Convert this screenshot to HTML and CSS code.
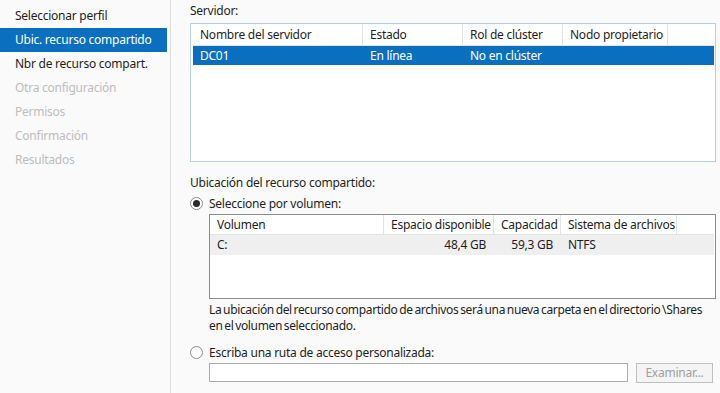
FILE: index.html
```html
<!DOCTYPE html>
<html lang="es">
<head>
    <meta charset="UTF-8">
    <title>Asistente para nuevo recurso compartido</title>
    <link rel="stylesheet" href="styles.css">
</head>
<body>
    <div class="wizard">
        <div class="nav">
            <div class="nav-item">Seleccionar perfil</div>
            <div class="nav-item active">Ubic. recurso compartido</div>
            <div class="nav-item">Nbr de recurso compart.</div>
            <div class="nav-item disabled">Otra configuración</div>
            <div class="nav-item disabled">Permisos</div>
            <div class="nav-item disabled">Confirmación</div>
            <div class="nav-item disabled">Resultados</div>
        </div>

        <div class="main">
            <div class="label server-label">Servidor:</div>
            <div class="list server-list">
                <div class="list-head">
                    <div class="col c-name">Nombre del servidor</div>
                    <div class="col c-state">Estado</div>
                    <div class="col c-role">Rol de clúster</div>
                    <div class="col c-node">Nodo propietario</div>
                </div>
                <div class="list-row selected">
                    <div class="col c-name">DC01</div>
                    <div class="col c-state">En línea</div>
                    <div class="col c-role">No en clúster</div>
                    <div class="col c-node"></div>
                </div>
            </div>

            <div class="label loc-label">Ubicación del recurso compartido:</div>

            <div class="radio-row">
                <span class="radio checked"></span>
                <span>Seleccione por volumen:</span>
            </div>

            <div class="indent">
                <div class="list volume-list">
                    <div class="list-head">
                        <div class="col v-name">Volumen</div>
                        <div class="col v-free">Espacio disponible</div>
                        <div class="col v-cap">Capacidad</div>
                        <div class="col v-fs">Sistema de archivos</div>
                    </div>
                    <div class="list-row hover">
                        <div class="col v-name">C:</div>
                        <div class="col v-free num">48,4 GB</div>
                        <div class="col v-cap num">59,3 GB</div>
                        <div class="col v-fs">NTFS</div>
                    </div>
                </div>
                <p class="note">La ubicación del recurso compartido de archivos será una nueva carpeta en el directorio \Shares<br>en el volumen seleccionado.</p>
            </div>

            <div class="radio-row second">
                <span class="radio"></span>
                <span>Escriba una ruta de acceso personalizada:</span>
            </div>

            <div class="indent path-row">
                <div class="path-input"></div>
                <div class="btn disabled">Examinar...</div>
            </div>
        </div>
    </div>
</body>
</html>
```

FILE: styles.css
```css
* {
    margin: 0;
    padding: 0;
    box-sizing: border-box;
}

body {
    font-family: "Noto Sans", "Open Sans", sans-serif;
    font-size: 12px;
    letter-spacing: -0.25px;
    color: #1e1e1e;
    background: #fafafa;
    width: 720px;
    height: 393px;
    overflow: hidden;
}

.wizard {
    display: flex;
    height: 393px;
}

/* navegación izquierda */
.nav {
    width: 171px;
    padding-top: 4px;
    border-right: 1px solid #dcdcdc;
    padding-right: 3px;
}

.nav-item {
    height: 24px;
    line-height: 24px;
    padding-left: 15px;
    white-space: nowrap;
}

.nav-item.active {
    background: #0a6fbf;
    color: white;
}

.nav-item.disabled {
    color: #bdbdbd;
}

/* contenido */
.main {
    flex: 1;
    padding-left: 19px;
    padding-right: 4px;
}

.label {
    line-height: 16px;
}

.server-label {
    padding-top: 3px;
    height: 23px;
}

.list {
    background: white;
}

.server-list {
    height: 139px;
    border: 1px solid #b5cde5;
    padding: 0 1px 0 2px;
}

.volume-list {
    height: 85px;
    border: 1px solid #8c8c8c;
    padding: 0 1px 0 0;
}

.list-head {
    display: flex;
    height: 22px;
    border-bottom: 1px solid #e3e3e3;
}

.list-head .col {
    border-right: 1px solid #e3e3e3;
    line-height: 21px;
}

.volume-list .list-head {
    height: 20px;
}

.volume-list .list-head .col {
    line-height: 19px;
}

.col {
    padding: 0 7px;
    white-space: nowrap;
    overflow: hidden;
}

.list-row {
    display: flex;
    height: 19px;
    line-height: 19px;
}

.volume-list .list-row {
    height: 20px;
    line-height: 20px;
}

.list-row .col {
    border-right: 1px solid transparent;
}

.list-row.selected {
    background: #0a6fbf;
    color: white;
}

.list-row.hover {
    background: #efefef;
}

.c-name { width: 170px; }
.c-state { width: 100px; }
.c-role { width: 100px; }
.c-node { width: 105px; }

.v-name { width: 174px; }
.v-free { width: 110px; }
.v-cap { width: 67px; }
.v-fs { width: 116px; }

.num {
    text-align: right;
}

.loc-label {
    padding-top: 13px;
}

.radio-row {
    display: flex;
    align-items: center;
    gap: 6px;
    height: 20px;
    margin-top: 2px;
    margin-bottom: 1px;
}

.radio-row.second {
    margin-top: 8px;
    margin-bottom: 1px;
}

.radio {
    width: 13px;
    height: 13px;
    border: 1px solid #8a8a8a;
    border-radius: 50%;
    background: white;
    display: flex;
    align-items: center;
    justify-content: center;
}

.radio.checked::after {
    content: "";
    width: 7px;
    height: 7px;
    border-radius: 50%;
    background: #2b2b2b;
}

.indent {
    margin-left: 19px;
}

.note {
    margin-top: 3px;
    line-height: 16px;
    white-space: nowrap;
    letter-spacing: -0.35px;
    word-spacing: -1px;
}

.path-row {
    display: flex;
    gap: 8px;
}

.path-input {
    width: 419px;
    height: 19px;
    border: 1px solid #acacac;
    background: white;
}

.btn {
    width: 77px;
    height: 20px;
    border: 1px solid #bfbfbf;
    background: #f4f4f4;
    text-align: center;
    line-height: 18px;
}

.btn.disabled {
    color: #a0a0a0;
}
```
